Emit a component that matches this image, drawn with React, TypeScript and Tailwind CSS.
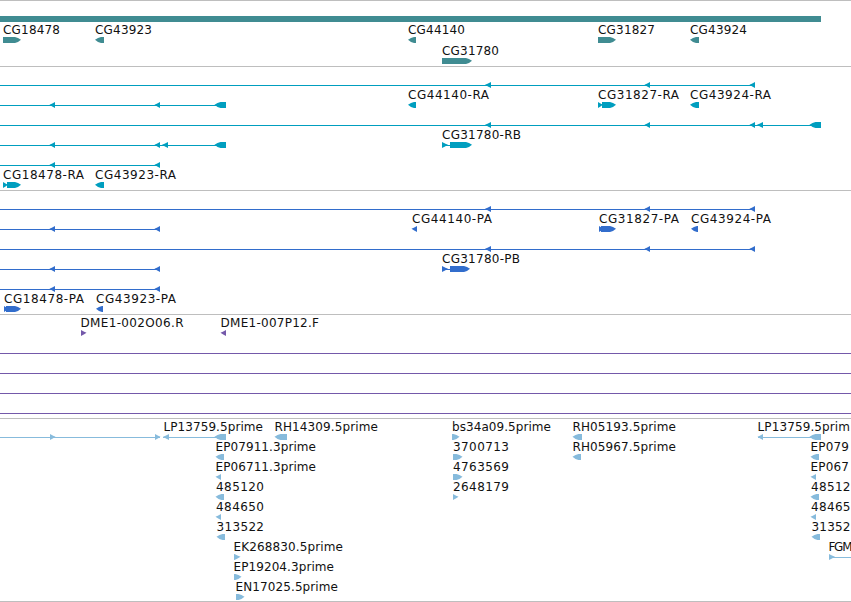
import React from "react";

type Dir = "l" | "r";
type Label = [text: string, x: number, width: number];
type Shape = [dir: Dir, x1: number, x2: number];
type Line = [x1: number, x2: number];

interface Row {
  lines?: Line[];
  shapes?: Shape[];
  labels?: Label[];
}

const WIDTH = 851;

function points(dir: Dir, x1: number, x2: number, top: number) {
  const head = Math.min(6, x2 - x1);
  const mid = top + 2.8;
  const bottom = top + 6;
  const wide = x2 - x1 >= 7;
  const shoulder = head / 2;
  const up = top + (wide ? 0.9 : 1.4);
  const down = bottom - (wide ? 1 : 1.5);
  return dir === "r"
    ? `${x1},${top} ${x2 - head},${top} ${x2 - shoulder},${up} ${x2},${mid} ${x2 - shoulder},${down} ${x2 - head},${bottom} ${x1},${bottom}`
    : `${x2},${top} ${x1 + head},${top} ${x1 + shoulder},${up} ${x1},${mid} ${x1 + shoulder},${down} ${x1 + head},${bottom} ${x2},${bottom}`;
}

function FeatureRow({ row, tall }: { row: Row; tall?: boolean }) {
  return (
    <svg
      width={WIDTH}
      height={tall ? 21 : 20}
      className="block shrink-0 overflow-hidden"
      fill="currentColor"
    >
      {row.lines?.map(([a, b], i) => (
        <rect key={i} x={a} y={17} width={b - a} height={1} />
      ))}
      {row.shapes?.map(([d, a, b], i) => (
        <polygon key={i} points={points(d, a, b, 14)} />
      ))}
      {row.labels?.map(([text, x, w], i) => (
        <text
          key={i}
          x={x}
          y={11}
          textLength={w}
          className="fill-[#111111] font-['DejaVu_Sans',sans-serif] text-[12px]"
        >
          {text}
        </text>
      ))}
    </svg>
  );
}

function Track({ rows, className }: { rows: Row[]; className: string }) {
  return (
    <section className={`flex flex-col border-t border-[#bebebe] pt-px ${className}`}>
      {rows.map((row, i) => (
        <FeatureRow key={i} row={row} />
      ))}
    </section>
  );
}

const geneRows: Row[] = [
  {
    shapes: [["r", 3, 21], ["l", 95, 104], ["l", 408, 416], ["r", 598, 616], ["l", 690, 699]],
    labels: [
      ["CG18478", 3, 57],
      ["CG43923", 95, 57],
      ["CG44140", 408, 57],
      ["CG31827", 598, 57],
      ["CG43924", 690, 57],
    ],
  },
  { shapes: [["r", 442, 472]], labels: [["CG31780", 442, 57]] },
];

const transcriptRows: Row[] = [
  { lines: [[0, 755]], shapes: [["l", 485, 491], ["l", 644.5, 650], ["l", 749.5, 755]] },
  {
    lines: [[0, 226]],
    shapes: [
      ["l", 49.5, 55], ["l", 154.5, 160], ["l", 214.5, 226], ["l", 408, 416],
      ["r", 598, 603], ["r", 602, 616], ["l", 690, 699],
    ],
    labels: [["CG44140-RA", 408, 81], ["CG31827-RA", 598, 81], ["CG43924-RA", 690, 81]],
  },
  {
    lines: [[0, 821]],
    shapes: [["l", 485, 491], ["l", 644.5, 650], ["l", 749.5, 755], ["l", 757, 763], ["l", 809.5, 821]],
  },
  {
    lines: [[0, 226], [442, 452]],
    shapes: [
      ["l", 49.5, 55], ["l", 154.5, 160], ["l", 162, 168], ["l", 214.5, 226],
      ["r", 442, 448], ["r", 450, 472],
    ],
    labels: [["CG31780-RB", 442, 79]],
  },
  { lines: [[0, 160]], shapes: [["l", 49.5, 55], ["l", 154.5, 160]] },
  {
    shapes: [["r", 3, 8], ["r", 7, 21], ["l", 95, 104]],
    labels: [["CG18478-RA", 3, 81], ["CG43923-RA", 95, 81]],
  },
];

const proteinRows: Row[] = [
  { lines: [[0, 755]], shapes: [["l", 485, 491], ["l", 644.5, 650], ["l", 749.5, 755]] },
  {
    lines: [[0, 160]],
    shapes: [
      ["l", 49.5, 55], ["l", 154.5, 160], ["l", 411.5, 417],
      ["r", 599, 604], ["r", 601, 616], ["l", 691, 698],
    ],
    labels: [["CG44140-PA", 412, 80], ["CG31827-PA", 599, 80], ["CG43924-PA", 691, 80]],
  },
  { lines: [[0, 755]], shapes: [["l", 485, 491], ["l", 644.5, 650], ["l", 749.5, 755]] },
  {
    lines: [[0, 160], [442, 452]],
    shapes: [["l", 49.5, 55], ["l", 154.5, 160], ["r", 442, 448], ["r", 450, 470]],
    labels: [["CG31780-PB", 442, 78]],
  },
  { lines: [[0, 160]], shapes: [["l", 49.5, 55], ["l", 154.5, 160]] },
  {
    shapes: [["r", 4, 9], ["r", 6, 21], ["l", 96, 103]],
    labels: [["CG18478-PA", 4, 80], ["CG43923-PA", 96, 80]],
  },
];

const cloneRows: Row[] = [
  {
    shapes: [["r", 81, 86.5], ["l", 220.5, 226]],
    labels: [["DME1-002O06.R", 80.5, 103], ["DME1-007P12.F", 220.5, 98.5]],
  },
  { lines: [[0, WIDTH]] },
  { lines: [[0, WIDTH]] },
  { lines: [[0, WIDTH]] },
  { lines: [[0, WIDTH]] },
];

const estRows: Row[] = [
  {
    lines: [[0, 160], [163, 226], [758, 821]],
    shapes: [
      ["r", 50, 55.5], ["r", 155, 160.5], ["l", 163, 169], ["l", 214.5, 226],
      ["l", 274.5, 287], ["r", 452, 459.5], ["l", 572.5, 582],
      ["l", 757.5, 763], ["l", 809.5, 821],
    ],
    labels: [
      ["LP13759.5prime", 163.5, 99.5],
      ["RH14309.5prime", 274.5, 103.5],
      ["bs34a09.5prime", 452, 99],
      ["RH05193.5prime", 572.5, 103.5],
      ["LP13759.5prim", 757.5, 92.5],
    ],
  },
  {
    shapes: [["l", 215.5, 224], ["r", 453, 462.5], ["l", 572.5, 581], ["l", 810.5, 819]],
    labels: [
      ["EP07911.3prime", 215.5, 100.5],
      ["3700713", 453, 56],
      ["RH05967.5prime", 572.5, 103.5],
      ["EP079", 810.5, 38.5],
    ],
  },
  {
    shapes: [["l", 215.5, 221], ["r", 453, 462.5], ["l", 810.5, 816]],
    labels: [["EP06711.3prime", 215.5, 100.5], ["4763569", 453, 56], ["EP067", 810.5, 38.5]],
  },
  {
    shapes: [["l", 215.5, 224], ["r", 453, 458.5], ["l", 810.5, 819]],
    labels: [["485120", 216, 48], ["2648179", 453, 56], ["48512", 811, 39.5]],
  },
  {
    shapes: [["l", 215.5, 221], ["l", 810.5, 816]],
    labels: [["484650", 216, 48], ["48465", 811, 39.5]],
  },
  {
    shapes: [["l", 216.5, 225], ["l", 811.5, 820]],
    labels: [["313522", 216.5, 47.5], ["31352", 811.5, 39]],
  },
  {
    lines: [[829, WIDTH]],
    shapes: [["r", 234, 240.5], ["r", 829, 835]],
    labels: [["EK268830.5prime", 233.5, 109.5], ["FGM", 828.5, 24]],
  },
  { shapes: [["r", 234, 241.5]], labels: [["EP19204.3prime", 233.5, 100.5]] },
  { shapes: [["r", 236, 244.5]], labels: [["EN17025.5prime", 235.5, 102.5]] },
];

export default function App() {
  return (
    <main className="flex h-[602px] w-[851px] flex-col overflow-hidden bg-white">
      <section className="flex flex-col border-t border-[#bebebe] pt-[15px] pb-px text-[#408c92]">
        <div className="mb-px h-1.5 w-[821px] bg-[#408c92]" />
        {geneRows.map((row, i) => (
          <FeatureRow key={i} row={row} tall />
        ))}
      </section>
      <Track rows={transcriptRows} className="pb-0.5 text-[#009ebf]" />
      <Track rows={proteinRows} className="pb-0.5 text-[#326dcc]" />
      <Track rows={cloneRows} className="pb-0.5 text-[#7459aa]" />
      <Track rows={estRows} className="border-b pb-px text-[#87bbdc]" />
    </main>
  );
}
